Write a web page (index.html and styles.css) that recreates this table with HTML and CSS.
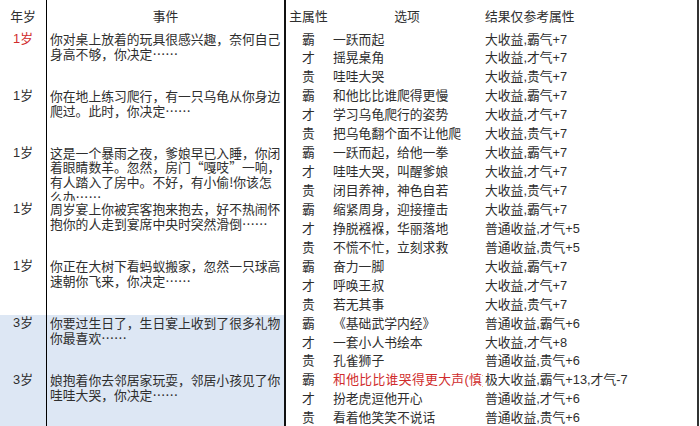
FILE: index.html
```html
<!DOCTYPE html>
<html lang="zh-CN">
<head>
<meta charset="utf-8">
<title>年岁事件表</title>
<link rel="stylesheet" href="styles.css">
</head>
<body>
<div class="sheet">
  <div class="h age-h">年岁</div>
  <div class="h ev-h">事件</div>
  <div class="h attr-h">主属性</div>
  <div class="h opt-h">选项</div>
  <div class="h res-h">结果仅参考属性</div>

  <div class="age red">1岁</div>
  <div class="event">你对桌上放着的玩具很感兴趣，奈何自己身高不够，你决定……</div>
  <div class="attr">霸</div><div class="opt">一跃而起</div><div class="res">大收益,霸气+7</div>
  <div class="attr">才</div><div class="opt">摇晃桌角</div><div class="res">大收益,才气+7</div>
  <div class="attr">贵</div><div class="opt">哇哇大哭</div><div class="res">大收益,贵气+7</div>

  <div class="age">1岁</div>
  <div class="event">你在地上练习爬行，有一只乌龟从你身边爬过。此时，你决定……</div>
  <div class="attr">霸</div><div class="opt">和他比比谁爬得更慢</div><div class="res">大收益,霸气+7</div>
  <div class="attr">才</div><div class="opt">学习乌龟爬行的姿势</div><div class="res">大收益,才气+7</div>
  <div class="attr">贵</div><div class="opt">把乌龟翻个面不让他爬</div><div class="res">大收益,贵气+7</div>

  <div class="age">1岁</div>
  <div class="event">这是一个暴雨之夜，爹娘早已入睡，你闭着眼睛数羊。忽然，房门“嘎吱”一响，有人踏入了房中。不好，有小偷!你该怎么办……</div>
  <div class="attr">霸</div><div class="opt">一跃而起，给他一拳</div><div class="res">大收益,霸气+7</div>
  <div class="attr">才</div><div class="opt">哇哇大哭，叫醒爹娘</div><div class="res">大收益,才气+7</div>
  <div class="attr">贵</div><div class="opt">闭目养神，神色自若</div><div class="res">大收益,贵气+7</div>

  <div class="age">1岁</div>
  <div class="event">周岁宴上你被宾客抱来抱去，好不热闹怀抱你的人走到宴席中央时突然滑倒……</div>
  <div class="attr">霸</div><div class="opt">缩紧周身，迎接撞击</div><div class="res">大收益,霸气+7</div>
  <div class="attr">才</div><div class="opt">挣脱襁褓，华丽落地</div><div class="res">普通收益,才气+5</div>
  <div class="attr">贵</div><div class="opt">不慌不忙，立刻求救</div><div class="res">普通收益,贵气+5</div>

  <div class="age">1岁</div>
  <div class="event">你正在大树下看蚂蚁搬家，忽然一只球高速朝你飞来，你决定……</div>
  <div class="attr">霸</div><div class="opt">奋力一脚</div><div class="res">大收益,霸气+7</div>
  <div class="attr">才</div><div class="opt">呼唤王叔</div><div class="res">大收益,才气+7</div>
  <div class="attr">贵</div><div class="opt">若无其事</div><div class="res">大收益,贵气+7</div>

  <div class="age hl">3岁</div>
  <div class="event hl">你要过生日了，生日宴上收到了很多礼物你最喜欢……</div>
  <div class="attr">霸</div><div class="opt">《基础武学内经》</div><div class="res">普通收益,霸气+6</div>
  <div class="attr">才</div><div class="opt">一套小人书绘本</div><div class="res">大收益,才气+8</div>
  <div class="attr">贵</div><div class="opt">孔雀狮子</div><div class="res">普通收益,贵气+6</div>

  <div class="age hl">3岁</div>
  <div class="event hl">娘抱着你去邻居家玩耍，邻居小孩见了你哇哇大哭，你决定……</div>
  <div class="attr">霸</div><div class="opt red wide">和他比比谁哭得更大声(慎)</div><div class="res">极大收益,霸气+13,才气-7</div>
  <div class="attr">才</div><div class="opt">扮老虎逗他开心</div><div class="res">普通收益,才气+6</div>
  <div class="attr">贵</div><div class="opt">看着他笑笑不说话</div><div class="res">普通收益,贵气+6</div>
</div>
</body>
</html>
```

FILE: styles.css
```css
html, body {
  margin: 0;
  padding: 0;
  background: #ffffff;
  overflow: hidden;
}

body {
  font-family: "Liberation Sans", "Noto Sans CJK SC", sans-serif;
  font-size: 12.8px;
  color: #2e2e2e;
}

.sheet {
  display: grid;
  grid-template-columns: 46px 240px 45px 152px 216px;
  grid-template-rows: 30.5px;
  grid-auto-rows: 18.95px;
  width: 699px;
}

.h {
  display: flex;
  align-items: center;
  justify-content: center;
  white-space: nowrap;
}

.ev-h {
  border-left: 1px solid #000;
  border-right: 2px solid #111;
}

.res-h {
  justify-content: flex-start;
  padding-left: 2px;
  border-right: 2px solid #333;
}

.age {
  grid-column: 1;
  grid-row: span 3;
  text-align: center;
  padding-top: 1.5px;
  line-height: 14.8px;
}

.event {
  grid-column: 2;
  grid-row: span 3;
  border-left: 1px solid #000;
  border-right: 2px solid #111;
  padding: 1.5px 0 0 3px;
  line-height: 14.8px;
  overflow: hidden;
  font-family: "Noto Sans CJK SC", sans-serif;
}

.attr {
  grid-column: 3;
  text-align: center;
  line-height: 18.95px;
}

.opt {
  grid-column: 4;
  padding-left: 2px;
  line-height: 18.95px;
  white-space: nowrap;
  overflow: hidden;
}

.opt.wide {
  letter-spacing: 0.35px;
}

.res {
  grid-column: 5;
  padding-left: 2px;
  line-height: 18.95px;
  white-space: nowrap;
  border-right: 2px solid #333;
}

.hl {
  background: #dde7f4;
}

.red {
  color: #d02c2c;
}
```
